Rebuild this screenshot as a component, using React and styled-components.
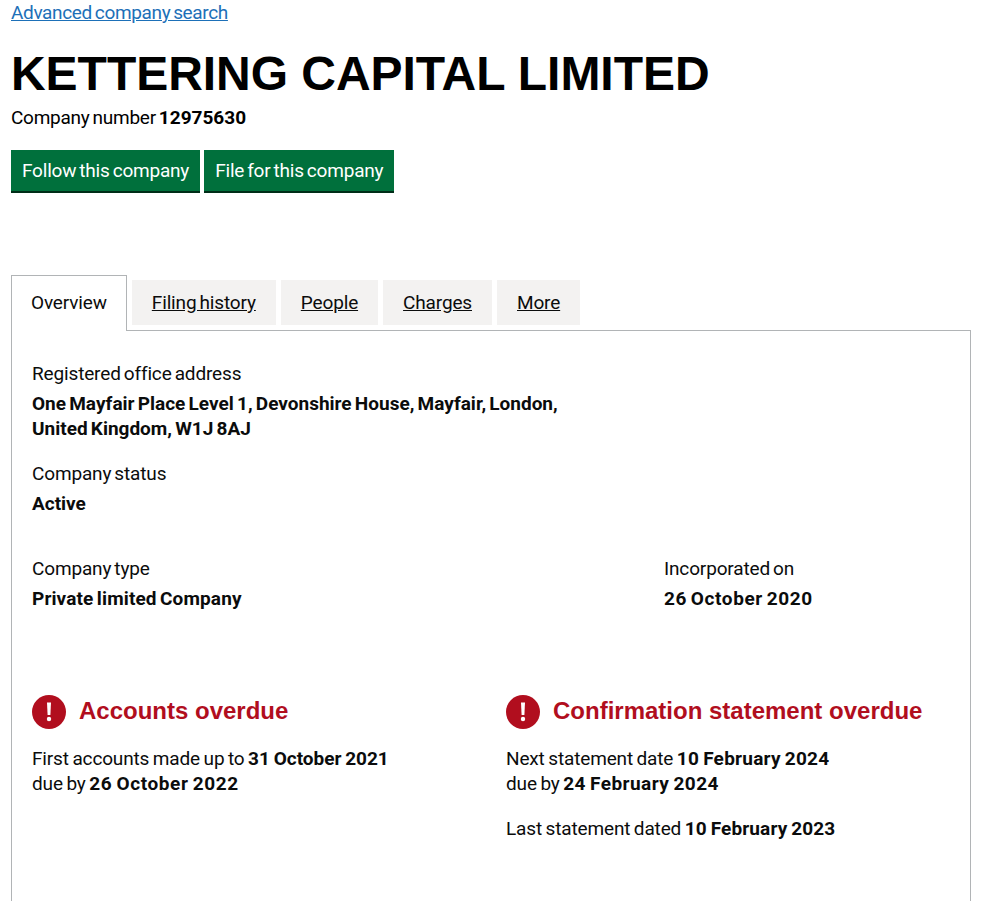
import styled, { createGlobalStyle } from 'styled-components';

const GlobalStyle = createGlobalStyle`
  html, body {
    margin: 0;
    padding: 0;
    height: 902px;
    overflow: hidden;
    background: #fff;
  }

  body {
    font-family: Roboto, "Open Sans", sans-serif;
    font-size: 19px;
    letter-spacing: -0.15px;
    word-spacing: -1.5px;
    color: #0b0c0c;
  }
`;

const Page = styled.div`
  padding: 0 11px;
`;

const SearchLink = styled.a`
  display: block;
  height: 26px;
  font-size: 19px;
  line-height: 26px;
  letter-spacing: -0.35px;
  color: #1d70b8;
  text-decoration: underline;
`;

const Title = styled.h1`
  margin: 20px 0 0;
  font-family: "Liberation Sans", Arial, sans-serif;
  font-size: 48px;
  line-height: 56px;
  font-weight: 700;
  letter-spacing: -0.04px;
  word-spacing: 0;
  color: #000;
`;

const CompanyNumber = styled.p`
  margin: 3px 0 0;
  font-size: 19px;
  line-height: 26px;
  letter-spacing: -0.25px;
  color: #000;
`;

const Bold = styled.strong`
  font-weight: 700;
  letter-spacing: ${(props) => props.$track || 0}px;
`;

const Actions = styled.div`
  display: flex;
  gap: 4px;
  margin-top: 19px;
`;

const Button = styled.a`
  display: block;
  height: 41px;
  padding: 0 11px;
  background: #00703c;
  border-bottom: 2px solid #002d18;
  font-size: 19px;
  line-height: 41px;
  letter-spacing: -0.2px;
  color: #fff;
`;

const Tabs = styled.ul`
  display: flex;
  align-items: flex-end;
  gap: 5px;
  height: 55px;
  margin: 82px 0 0;
  padding: 0;
  list-style: none;
`;

const Tab = styled.li`
  box-sizing: border-box;
  height: ${(props) => (props.$active ? '56px' : '45px')};
  margin-bottom: ${(props) => (props.$active ? '-1px' : '5px')};
  padding: ${(props) => (props.$active ? '14px 19px 0' : '10px 20px 0')};
  background: ${(props) => (props.$active ? '#fff' : '#f3f2f1')};
  border: ${(props) => (props.$active ? '1px solid #b1b4b6' : 'none')};
  border-bottom: none;
  font-size: 19px;
  line-height: 26px;
  color: #0b0c0c;
  text-decoration: ${(props) => (props.$active ? 'none' : 'underline')};
`;

const Panel = styled.section`
  box-sizing: border-box;
  width: 960px;
  height: 571px;
  padding: 30px 20px;
  border: 1px solid #b1b4b6;
  border-bottom: none;
`;

const Label = styled.div`
  font-size: 19px;
  line-height: 26px;
`;

const Value = styled.div`
  margin-top: 4px;
  font-size: 19px;
  font-weight: 700;
  line-height: 25px;
  letter-spacing: ${(props) => props.$track || 0}px;
  color: #0b0c0c;
`;

const Address = styled(Value)`
  width: 560px;
`;

const Field = styled.div`
  margin-bottom: ${(props) => props.$gap || 0}px;
`;

const Columns = styled.div`
  display: grid;
  grid-template-columns: ${(props) => props.$columns};
  margin-top: ${(props) => props.$top || 0}px;
`;

const AlertTitle = styled.h2`
  display: flex;
  align-items: flex-start;
  gap: 13px;
  margin: 0 0 17px;
  font-family: "Liberation Sans", Arial, sans-serif;
  font-size: 24px;
  line-height: 34px;
  font-weight: 700;
  letter-spacing: 0;
  word-spacing: 0;
  color: #b10e1e;
`;

const AlertIconSvg = styled.svg`
  flex: none;
  margin-top: 1px;
`;

const AlertText = styled.p`
  margin: 0 0 20px;
  font-size: 19px;
  line-height: 25px;
  word-spacing: -1px;
`;

const AlertIcon = () => (
  <AlertIconSvg width="34" height="34" viewBox="0 0 34 34" aria-hidden="true">
    <circle cx="17" cy="17" r="17" fill="#b10e1e" />
    <path d="M15 7.5h4l-.6 12.5h-2.8z" fill="#fff" />
    <circle cx="17" cy="24" r="2.2" fill="#fff" />
  </AlertIconSvg>
);

const App = () => (
  <Page>
    <GlobalStyle />
    <SearchLink href="#">Advanced company search</SearchLink>
    <Title>KETTERING CAPITAL LIMITED</Title>
    <CompanyNumber>
      Company number <Bold>12975630</Bold>
    </CompanyNumber>
    <Actions>
      <Button>Follow this company</Button>
      <Button>File for this company</Button>
    </Actions>

    <Tabs>
      <Tab $active>Overview</Tab>
      <Tab>Filing history</Tab>
      <Tab>People</Tab>
      <Tab>Charges</Tab>
      <Tab>More</Tab>
    </Tabs>

    <Panel>
      <Field $gap={20}>
        <Label>Registered office address</Label>
        <Address>
          One Mayfair Place Level 1, Devonshire House, Mayfair, London, United Kingdom, W1J 8AJ
        </Address>
      </Field>
      <Field $gap={40}>
        <Label>Company status</Label>
        <Value>Active</Value>
      </Field>
      <Columns $columns="632px 1fr">
        <Field>
          <Label>Company type</Label>
          <Value $track={0.13}>Private limited Company</Value>
        </Field>
        <Field>
          <Label>Incorporated on</Label>
          <Value $track={0.6}>26 October 2020</Value>
        </Field>
      </Columns>
      <Columns $columns="474px 1fr" $top={83}>
        <div>
          <AlertTitle>
            <AlertIcon />
            Accounts overdue
          </AlertTitle>
          <AlertText>
            First accounts made up to <Bold>31 October 2021</Bold>
            <br />
            due by <Bold $track={0.6}>26 October 2022</Bold>
          </AlertText>
        </div>
        <div>
          <AlertTitle>
            <AlertIcon />
            Confirmation statement overdue
          </AlertTitle>
          <AlertText>
            Next statement date <Bold $track={0.25}>10 February 2024</Bold>
            <br />
            due by <Bold $track={0.45}>24 February 2024</Bold>
          </AlertText>
          <AlertText>
            Last statement dated <Bold $track={0.13}>10 February 2023</Bold>
          </AlertText>
        </div>
      </Columns>
    </Panel>
  </Page>
);

export default App;
